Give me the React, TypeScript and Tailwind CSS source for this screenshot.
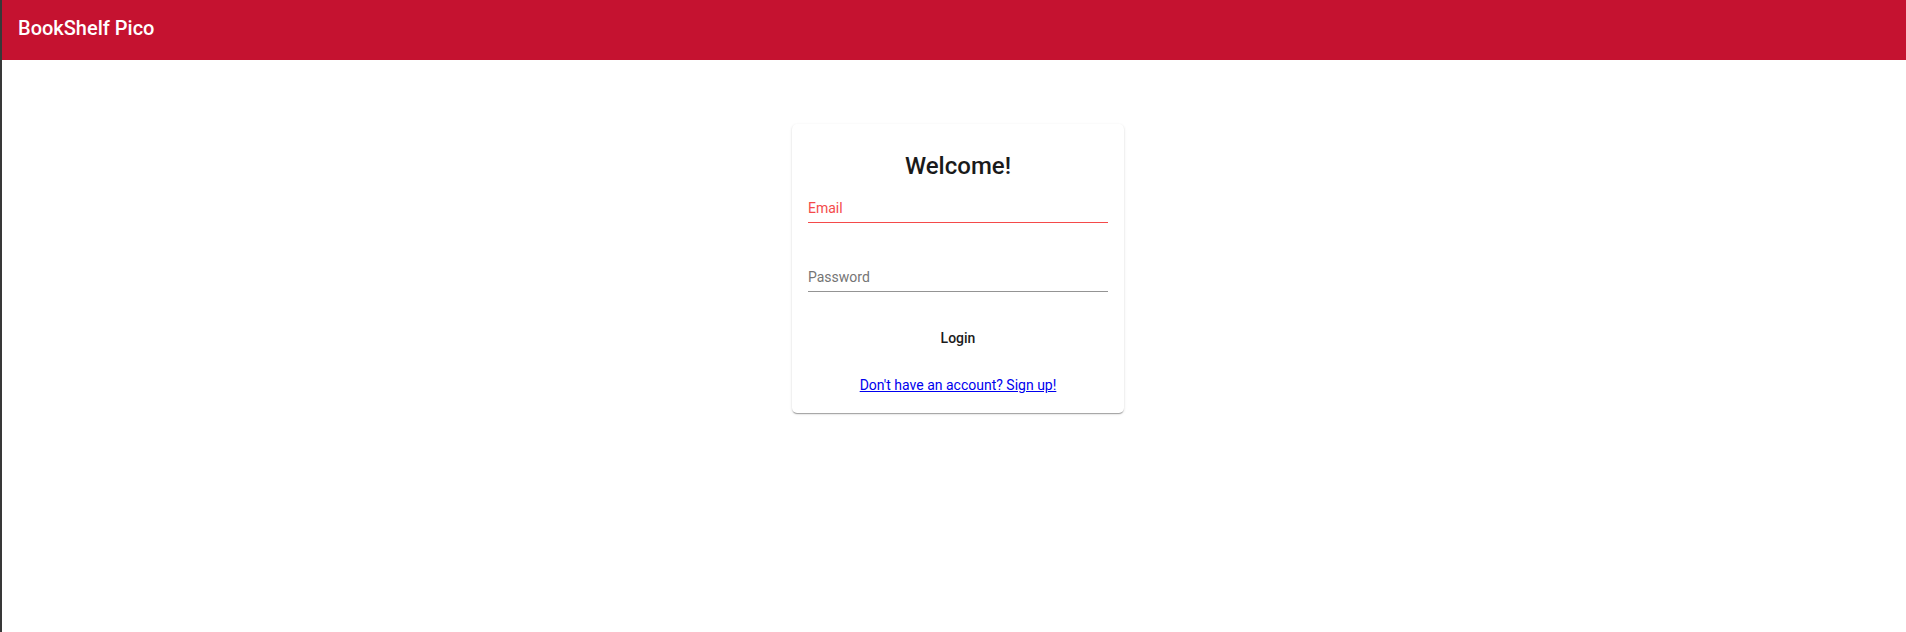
export default function App() {
  return (
    <div
      className="h-[632px] w-full border-l-2 border-[#383838] bg-white"
      style={{ fontFamily: "Roboto, 'Liberation Sans', sans-serif" }}
    >
      <header className="h-[60px] bg-[#c51230] px-4 pt-4">
        <h1 className="text-[20px] leading-6 font-medium text-white">BookShelf Pico</h1>
      </header>

      <main className="flex justify-center pt-16 pl-2">
        <div className="w-[332px] rounded-[5px] bg-white px-4 pt-[26px] pb-4 shadow-[0_2px_1px_-1px_rgba(0,0,0,0.2),0_1px_1px_0_rgba(0,0,0,0.14),0_1px_3px_0_rgba(0,0,0,0.12)]">
          <h2 className="text-center text-[24px] leading-8 font-medium text-[#1a1a1a]">Welcome!</h2>

          <div className="mt-4 border-b border-[#f44a4a] pb-1">
            <label className="block text-[14px] leading-5 text-[#f44a4a]">Email</label>
          </div>

          <div className="mt-[44px] border-b border-[#949494] pb-1">
            <label className="block text-[14px] leading-5 text-[#757575]">Password</label>
          </div>

          <div className="mt-9 flex justify-center">
            <button className="text-[14px] leading-5 font-medium text-[#1b1b1b]">Login</button>
          </div>

          <div className="mt-[25px] text-center">
            <a href="#" className="text-[14px] leading-5 text-[#0000ee] underline">
              Don't have an account? Sign up!
            </a>
          </div>
        </div>
      </main>
    </div>
  );
}
